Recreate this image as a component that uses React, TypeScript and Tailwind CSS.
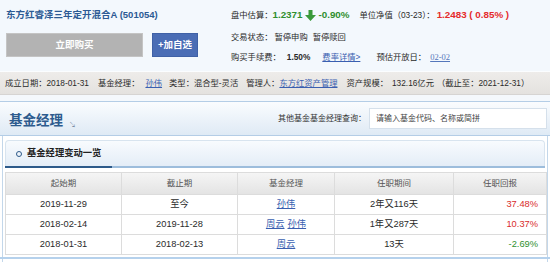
import React from "react";

const rows = [
  { s: "2019-11-29", e: "至今", m: ["孙伟"], d: "2年又116天", r: "37.48%", up: true },
  { s: "2018-02-14", e: "2019-11-28", m: ["周云", "孙伟"], d: "1年又287天", r: "10.37%", up: true },
  { s: "2018-01-31", e: "2018-02-13", m: ["周云"], d: "13天", r: "-2.69%", up: false },
];

function DownArrow() {
  return (
    <svg width="11" height="11" viewBox="0 0 11 11" className="ml-[3px] mr-[2px]">
      <polygon points="3.5,0 7.5,0 7.5,5 11,5 5.5,11 0,5 3.5,5" fill="#3a9a3a" />
    </svg>
  );
}

export default function App() {
  return (
    <div
      className="w-[550px] h-[262px] overflow-hidden bg-white text-[8.3px] text-[#2a2a2a]"
      style={{ fontFamily: '"Liberation Sans", "Noto Sans CJK SC", sans-serif' }}
    >
      {/* top */}
      <div className="flex h-[71px] bg-[#f3f8fd]">
        <div className="w-[225px] pl-[6px] pt-[8px]">
          <div className="h-[14px] leading-[14px] font-bold text-[9.5px] text-[#2b5a94] whitespace-nowrap">
            东方红睿泽三年定开混合A (501054)
          </div>
          <div className="mt-[11px] flex gap-[9px]">
            <div className="w-[137px] h-[24px] bg-[#b3b3b3] border border-[#c4c4c4] text-white font-bold text-[9.5px] flex items-center justify-center">
              立即购买
            </div>
            <div className="w-[46px] h-[24px] bg-[#4a6db5] border border-[#3f61a6] text-white font-bold text-[9.5px] flex items-center justify-center">
              +加自选
            </div>
          </div>
        </div>
        <div className="pl-[6px] pt-[8px] whitespace-nowrap">
          <div className="h-[14px] flex items-center">
            <span>盘中估算：</span>
            <span className="text-[#2f8f2f] font-bold text-[9.8px]">1.2371</span>
            <DownArrow />
            <span className="text-[#2f8f2f] font-bold text-[9.8px]">-0.90%</span>
            <span className="ml-[10px]">单位净值（03-23）：</span>
            <span className="text-[#e52b2b] font-bold text-[9.8px] ml-[2px]">1.2483 ( 0.85% )</span>
          </div>
          <div className="h-[14px] mt-[8px] flex items-center">
            <span>交易状态：</span>
            <span className="ml-[2px]">暂停申购</span>
            <span className="ml-[5px]">暂停赎回</span>
          </div>
          <div className="h-[14px] mt-[6px] flex items-center">
            <span>购买手续费：</span>
            <span className="font-bold ml-[6px]">1.50%</span>
            <span className="ml-[12px] text-[#3a5fb0] underline">费率详情&gt;</span>
            <span className="ml-[16px]">预估开放日：</span>
            <span
              className="ml-[4px] text-[#5577bb] underline text-[8.5px]"
              style={{ fontFamily: '"Liberation Serif", serif' }}
            >
              02-02
            </span>
          </div>
        </div>
      </div>
      <div className="h-px bg-[#fbfdff]" />
      {/* info band */}
      <div className="h-[23px] bg-gradient-to-b from-[#eeecea] to-[#e4e2df] border-b border-[#d6d4d2] flex items-center pl-[5px] whitespace-nowrap text-[8.3px]">
        <span>成立日期：2018-01-31</span>
        <span className="ml-[9px]">基金经理：</span>
        <span className="ml-[6px] text-[#3a5fb0] underline">孙伟</span>
        <span className="ml-[7px]">类型：混合型-灵活</span>
        <span className="ml-[8px]">管理人：</span>
        <span className="text-[#3a5fb0] underline">东方红资产管理</span>
        <span className="ml-[9px]">资产规模：</span>
        <span className="ml-[4px]">132.16亿元</span>
        <span className="ml-[3px]">（截止至：2021-12-31）</span>
      </div>
      <div className="h-[6px] bg-[#f4f8fc]" />
      {/* section header */}
      <div className="h-[35px] border-y border-[#b4cde6] bg-gradient-to-b from-[#fafcfe] to-[#dfeaf5] flex items-center justify-between pl-[9px] pr-[3px]">
        <div className="flex items-end pt-[5px]">
          <span className="text-[13.5px] font-bold text-[#2d5b8e] leading-none">基金经理</span>
          <span className="ml-[6px] text-[7px] text-[#7a8ea6] leading-none">↘</span>
        </div>
        <div className="flex items-center">
          <span className="text-[8px] text-[#333]">其他基金基金经理查询：</span>
          <div className="ml-[3px] w-[178px] h-[21px] bg-white border border-[#d5e0eb] flex items-center pl-[6px] text-[8px] text-[#444]">
            请输入基金代码、名称或简拼
          </div>
        </div>
      </div>
      {/* panel */}
      <div className="mx-[2px] border-x border-[#c3d7ea] h-[200px] px-[2px] pt-[4px]">
        <div className="h-[26px] rounded-t-[4px] border border-b-0 border-[#d8e4ef] bg-gradient-to-b from-[#f8fbfe] to-[#e4edf7] flex items-center pl-[10px]">
          <span className="w-[6px] h-[6px] rounded-full border-[1.5px] border-[#2d5a8a]" />
          <span className="ml-[5px] text-[9.3px] font-bold text-[#222]">基金经理变动一览</span>
        </div>
        <div className="relative h-[2px] bg-[#9dbddc]">
          <div className="absolute left-0 top-0 h-[2px] w-[107px] bg-[#2d5a8a]" />
        </div>
        <table className="mt-[4px] w-[541px] border-collapse table-fixed text-[9.3px]">
          <colgroup>
            <col className="w-[116px]" />
            <col className="w-[116px]" />
            <col className="w-[97px]" />
            <col className="w-[119px]" />
            <col className="w-[93px]" />
          </colgroup>
          <thead>
            <tr className="h-[22px] bg-gradient-to-b from-[#f5f5f5] to-[#e3e3e3]">
              {["起始期", "截止期", "基金经理", "任职期间", "任职回报"].map((h) => (
                <th key={h} className="border border-[#dcdcdc] font-normal text-[8.5px] text-[#555] text-center">
                  {h}
                </th>
              ))}
            </tr>
          </thead>
          <tbody>
            {rows.map((r) => (
              <tr key={r.s} className="h-[20px]">
                <td className="border border-[#dcdcdc] text-center">{r.s}</td>
                <td className="border border-[#dcdcdc] text-center">{r.e}</td>
                <td className="border border-[#dcdcdc] text-center">
                  {r.m.map((n, i) => (
                    <span key={n} className={`text-[#3a5fb0] underline ${i > 0 ? "ml-[3px]" : ""}`}>
                      {n}
                    </span>
                  ))}
                </td>
                <td className="border border-[#dcdcdc] text-center">{r.d}</td>
                <td
                  className={`border border-[#dcdcdc] text-right pr-[8px] ${
                    r.up ? "text-[#d92b2b]" : "text-[#2f8f2f]"
                  }`}
                >
                  {r.r}
                </td>
              </tr>
            ))}
          </tbody>
        </table>
        <div className="mt-[2px] h-[2px] bg-[#b5d1ec] -mx-[5px]" />
      </div>
    </div>
  );
}
